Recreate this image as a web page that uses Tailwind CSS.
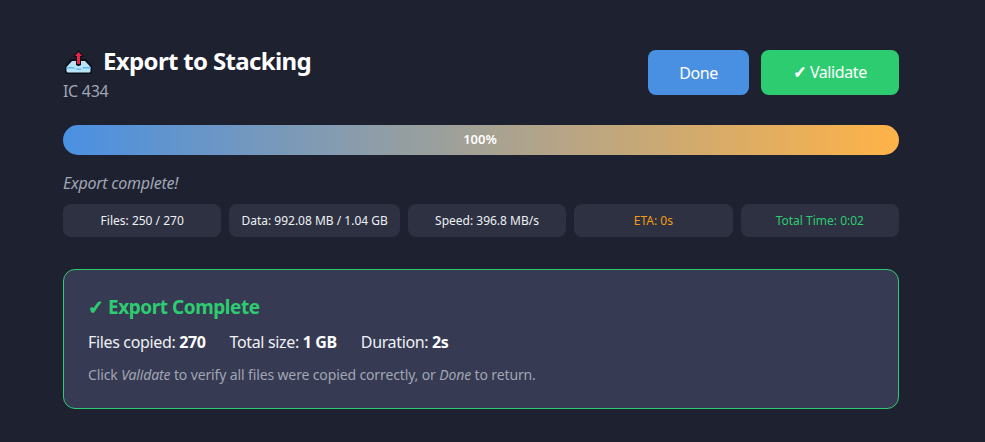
<!DOCTYPE html>
<html><head><meta charset="utf-8"><script src="https://cdn.jsdelivr.net/npm/@tailwindcss/browser@4"></script></head>
<body class="bg-[#1e2130] h-[442px] overflow-hidden font-['Noto_Sans','Open_Sans',sans-serif]">
<main class="ml-[63px] w-[836px] pt-[45px]">
  <header class="flex justify-between items-start h-[60px]">
    <div>
      <h1 class="flex items-center gap-[9px] text-[24px] leading-[34px] -mt-[1px] font-bold tracking-[-0.65px] text-white">
        <svg width="31" height="26" viewBox="0 0 31 26" class="shrink-0"><path d="M2 24 L2 18 L8 11 L23 11 L29 18 L29 24 Q29 26 27 26 L4 26 Q2 26 2 24Z" fill="#0d1018"/><path d="M3.5 19 L9 13 L22 13 L27.5 19 L27.5 23 Q27.5 24.5 26 24.5 L5 24.5 Q3.5 24.5 3.5 23Z" fill="#b9e4f7"/><path d="M3.5 19 H11 Q12 22 15.5 22 Q19 22 20 19 H27.5 V20.5 H3.5Z" fill="#5eb7ee"/><path d="M15.5 2 L21 9 L18 9 L18 17 Q15.5 19 13 17 L13 9 L10 9Z" fill="#0d1018"/><path d="M15.5 4 L19 8 L17 8 L17 16 H14 L14 8 L12 8Z" fill="#e8274b"/></svg>
        <span>Export to Stacking</span>
      </h1>
      <p class="text-[16px] leading-[20px] tracking-[-0.3px] text-[#a0a6b4] mt-[3px]">IC 434</p>
    </div>
    <div class="flex gap-3 pt-[5px]">
      <button class="h-[45px] w-[101px] rounded-lg bg-[#4a90e2] text-white text-[16px] tracking-[-0.4px]">Done</button>
      <button class="h-[45px] w-[138px] rounded-lg bg-[#2ecc71] text-white text-[16px] tracking-[-0.4px]"><span class="font-['DejaVu_Sans'] font-bold [-webkit-text-stroke:1px_white]">✓</span> Validate</button>
    </div>
  </header>
  <div class="mt-[20px] h-[30px] rounded-full bg-linear-to-r/srgb from-[#4a90e2] to-[#ffb347] flex items-center justify-center pr-[2px] text-[13px] font-semibold text-white">100%</div>
  <p class="mt-[18px] text-[16px] leading-[20px] italic tracking-[-0.25px] text-[#a0a6b4]">Export complete!</p>
  <div class="mt-[11px] flex gap-2 text-[12px] text-center whitespace-nowrap">
    <div class="flex-1 h-[33px] leading-[33px] px-3 rounded-lg bg-[#2d3142] text-[#eef0f4]">Files: 250 / 270</div>
    <div class="flex-1 h-[33px] leading-[33px] px-3 rounded-lg bg-[#2d3142] text-[#eef0f4]">Data: 992.08 MB / 1.04 GB</div>
    <div class="flex-1 h-[33px] leading-[33px] px-3 rounded-lg bg-[#2d3142] text-[#eef0f4]">Speed: 396.8 MB/s</div>
    <div class="flex-1 h-[33px] leading-[33px] px-3 rounded-lg bg-[#2d3142] text-[#f39c12]">ETA: 0s</div>
    <div class="flex-1 h-[33px] leading-[33px] px-3 rounded-lg bg-[#2d3142] text-[#2ecc71]">Total Time: 0:02</div>
  </div>
  <section class="mt-[32px] h-[140px] rounded-xl border border-[#2ecc71] bg-[#363a52] px-6 pt-[24px]">
    <h2 class="text-[19px] leading-[26px] font-bold tracking-[-0.45px] text-[#2ecc71]"><span class="font-['DejaVu_Sans'] [-webkit-text-stroke:1.2px_#2ecc71]">✓</span> Export Complete</h2>
    <div class="mt-[12px] flex gap-6 text-[16px] leading-[20px] tracking-[-0.35px] text-[#eef0f4]">
      <span>Files copied: <b class="text-white">270</b></span>
      <span>Total size: <b class="text-white">1 GB</b></span>
      <span>Duration: <b class="text-white">2s</b></span>
    </div>
    <p class="mt-[14px] text-[14px] leading-[18px] tracking-[-0.13px] text-[#a0a6b4]">Click <i>Validate</i> to verify all files were copied correctly, or <i>Done</i> to return.</p>
  </section>
</main>
</body></html>
